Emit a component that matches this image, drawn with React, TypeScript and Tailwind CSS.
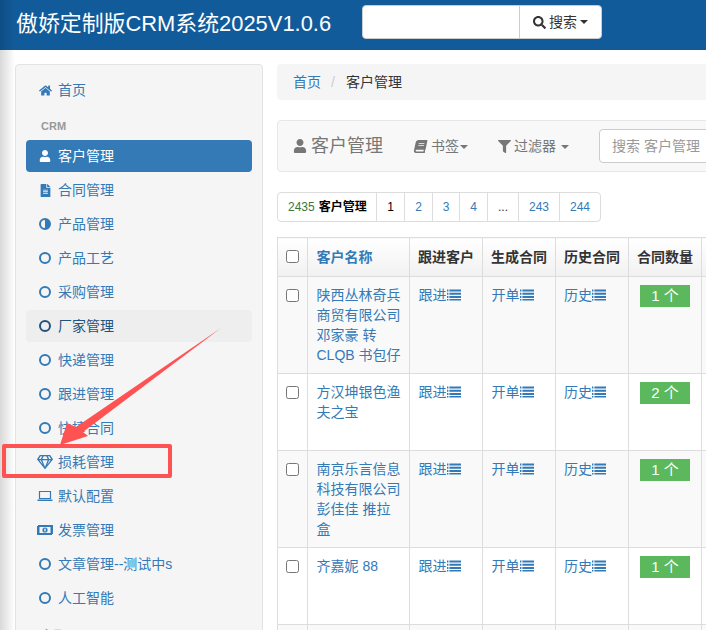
import React from "react";
import { FaHome, FaUser, FaFileAlt, FaRegGem, FaBook, FaFilter, FaSearch } from "react-icons/fa";

const Ring = () => (
  <svg width="14" height="14" viewBox="0 0 14 14" className="shrink-0">
    <circle cx="7" cy="7" r="5" fill="none" stroke="currentColor" strokeWidth="2" />
  </svg>
);
const Half = () => (
  <svg width="14" height="14" viewBox="0 0 14 14" className="shrink-0">
    <circle cx="7" cy="7" r="5" fill="none" stroke="currentColor" strokeWidth="2" />
    <path d="M7 2a5 5 0 0 1 0 10z" fill="currentColor" />
  </svg>
);
const Laptop = () => (
  <svg width="16" height="14" viewBox="0 0 16 14" className="shrink-0">
    <path d="M2.5 2.5h11v7h-11z" fill="none" stroke="currentColor" strokeWidth="1.2" />
    <path d="M0.5 10.5h15v1.5h-15z" fill="currentColor" />
  </svg>
);
const Money = () => (
  <svg width="16" height="14" viewBox="0 0 16 14" className="shrink-0">
    <path fillRule="evenodd" d="M0 2h16v10H0zM2.5 4v6h11V4z" fill="currentColor" />
    <circle cx="8" cy="7" r="2.6" fill="currentColor" />
    <rect x="7.3" y="5.6" width="1.4" height="2.8" fill="#f5f5f5" />
    <rect x="0" y="2" width="1" height="1" fill="#f5f5f5" />
    <rect x="15" y="11" width="1" height="1" fill="#f5f5f5" />
  </svg>
);
const ListIcon = () => (
  <svg width="14" height="14" viewBox="0 0 14 14" className="inline-block align-[-2px]">
    <path
      d="M0 1.5h1.4v2H0zM2.4 1.5H14v2H2.4zM0 4.7h1.4v2H0zM2.4 4.7H14v2H2.4zM0 7.9h1.4v2H0zM2.4 7.9H14v2H2.4zM0 11h1.4v1.6H0zM2.4 11H14v1.6H2.4z"
      fill="currentColor"
    />
  </svg>
);
const Caret = () => (
  <span className="inline-block w-0 h-0 align-middle border-x-[4px] border-x-transparent border-t-[4px] border-t-current" />
);

type Item = { label: string; icon: React.ReactNode; active?: boolean; hover?: boolean };

const items: Item[] = [
  { label: "客户管理", icon: <FaUser size={12} />, active: true },
  { label: "合同管理", icon: <FaFileAlt size={13} /> },
  { label: "产品管理", icon: <Half /> },
  { label: "产品工艺", icon: <Ring /> },
  { label: "采购管理", icon: <Ring /> },
  { label: "厂家管理", icon: <Ring />, hover: true },
  { label: "快递管理", icon: <Ring /> },
  { label: "跟进管理", icon: <Ring /> },
  { label: "快捷合同", icon: <Ring /> },
  { label: "损耗管理", icon: <FaRegGem size={16} /> },
  { label: "默认配置", icon: <Laptop /> },
  { label: "发票管理", icon: <Money /> },
  { label: "文章管理--测试中s", icon: <Ring /> },
  { label: "人工智能", icon: <Ring /> },
];

const NavRow = ({ item }: { item: Item }) => (
  <a
    className={
      "flex items-center h-8 rounded pl-[6px] " +
      (item.active
        ? "bg-[#337ab7] text-white"
        : item.hover
          ? "bg-[#eeeeee] text-[#23527c]"
          : "text-[#337ab7]")
    }
  >
    <span className="w-[26px] flex justify-center shrink-0">{item.icon}</span>
    <span>{item.label}</span>
  </a>
);

const rows = [
  { name: "陕西丛林奇兵商贸有限公司 邓家豪 转 CLQB 书包仔", n: 1, cls: "bg-[#f9f9f9]" },
  { name: "方汉坤银色渔夫之宝", n: 2, cls: "bg-white" },
  { name: "南京乐言信息科技有限公司 彭佳佳 推拉盒", n: 1, cls: "bg-[#f9f9f9]" },
  { name: "齐嘉妮 88", n: 1, cls: "bg-white" },
];

const td = "border border-[#dddddd] py-2 pr-2 pl-[8.5px] align-top";
const th = "border border-[#dddddd] py-2 pr-2 pl-[8.5px] align-middle text-left font-bold text-[#333333] bg-gradient-to-b from-white to-[#f1f1f1]";

const pages = [
  { p: "1", w: "w-[28px] text-black" },
  { p: "2", w: "w-[28px] text-[#337ab7]" },
  { p: "3", w: "w-[27px] text-[#337ab7]" },
  { p: "4", w: "w-[28px] text-[#337ab7]" },
  { p: "...", w: "w-[31px] text-[#333333]" },
  { p: "243", w: "w-[41px] text-[#337ab7]" },
  { p: "244", w: "flex-1 text-[#337ab7]" },
];

export default function App() {
  return (
    <div
      className="relative w-[706px] h-[630px] overflow-hidden bg-white text-[14px] leading-5 text-[#333333]"
      style={{ fontFamily: '"Liberation Sans", "Noto Sans CJK SC", sans-serif' }}
    >
      <header className="h-[50px] bg-[#125b9b] flex items-center pl-4">
        <h1 className="text-[21.9px] text-white font-normal whitespace-nowrap w-[346px] shrink-0 pb-[3px]">
          傲娇定制版CRM系统2025V1.0.6
        </h1>
        <div className="flex h-[34px] w-[240px] -mt-[6px] rounded bg-white border border-[#cccccc]">
          <div className="w-[157px] border-r border-[#cccccc]" />
          <div className="flex-1 flex items-center justify-center gap-[3px] text-[#333333]">
            <FaSearch size={13} />
            <span>搜索</span>
            <Caret />
          </div>
        </div>
      </header>

      <div className="flex items-start pl-[15px] pt-[14px] gap-[14px]">
        <aside className="w-[248px] h-[620px] shrink-0 bg-[#f5f5f5] border border-[#e3e3e3] rounded px-[10px] pt-[9px]">
          <NavRow item={{ label: "首页", icon: <FaHome size={13} /> }} />
          <div className="h-[18px] mt-[11px] mb-[5px] pl-[15px] text-[11px] font-bold text-[#999999] leading-[18px]">CRM</div>
          <div className="flex flex-col gap-[2px]">
            {items.map((it) => (
              <NavRow key={it.label} item={it} />
            ))}
          </div>
          <div className="mt-[11px] pl-[15px] text-[11px] font-bold text-[#999999]">产品</div>
        </aside>

        <main className="flex-1 min-w-0">
          <nav className="h-9 w-[600px] bg-[#f5f5f5] rounded flex items-center pl-[16px] whitespace-nowrap">
            <a className="text-[#337ab7]">首页</a>
            <span className="text-[#cccccc] px-[10px]">/</span>
            <span className="text-[#333333] pl-[1px]">客户管理</span>
          </nav>

          <div className="mt-5 h-[52px] w-[600px] bg-[#f8f8f8] border border-[#e7e7e7] rounded flex items-center whitespace-nowrap text-[#777777]">
            <span className="ml-[15px] flex items-center gap-[4px] w-[120px] shrink-0 text-[18px]">
              <FaUser size={14} className="shrink-0" />
              <span>客户管理</span>
            </span>
            <span className="flex items-center gap-[4px] w-[85px] shrink-0 pl-[1px]">
              <FaBook size={13} className="-skew-x-12" />
              <span>书签</span>
              <span className="-ml-[3px]"><Caret /></span>
            </span>
            <span className="flex items-center gap-[3px] w-[101px] shrink-0">
              <FaFilter size={13} />
              <span>过滤器</span>
              <span className="ml-[2px]"><Caret /></span>
            </span>
            <div className="h-[34px] w-[200px] shrink-0 bg-white border border-[#cccccc] rounded flex items-center pl-3 text-[#999999]">
              搜索 客户管理
            </div>
          </div>

          <div className="mt-5 h-[30px] w-[324px] flex border border-[#dddddd] rounded text-[12px] bg-white whitespace-nowrap">
            <div className="w-[99px] shrink-0 flex items-center pl-[10px] border-r border-[#dddddd]">
              <span className="text-[#3c763d]">2435</span>
              <b className="ml-[4px] text-black">客户管理</b>
            </div>
            {pages.map((x, i) => (
              <div
                key={x.p}
                className={
                  "flex items-center justify-center shrink-0 " +
                  (i < pages.length - 1 ? "border-r border-[#dddddd] " : "") +
                  x.w
                }
              >
                {x.p}
              </div>
            ))}
          </div>

          <table className="mt-[15px] table-fixed border-collapse w-[530px]">
            <colgroup>
              <col className="w-[30px]" />
              <col className="w-[102px]" />
              <col className="w-[73px]" />
              <col className="w-[73px]" />
              <col className="w-[73px]" />
              <col className="w-[73px]" />
              <col className="w-[106px]" />
            </colgroup>
            <thead>
              <tr className="h-[39px]">
                <th className={th + " !pl-2"}>
                  <input type="checkbox" className="block w-[13px] h-[13px] -mt-[1px]" />
                </th>
                <th className={th + " !text-[#337ab7]"}>客户名称</th>
                <th className={th + " !pl-2 whitespace-nowrap"}>跟进客户</th>
                <th className={th + " !pl-2 whitespace-nowrap"}>生成合同</th>
                <th className={th + " !pl-2 whitespace-nowrap"}>历史合同</th>
                <th className={th + " !pl-2 whitespace-nowrap"}>合同数量</th>
                <th className={th} />
              </tr>
            </thead>
            <tbody>
              {rows.map((r) => (
                <tr key={r.name} className={r.cls + " h-[77px]"}>
                  <td className={td + " !pl-2"}>
                    <input type="checkbox" className="block mt-[4px] w-[13px] h-[13px]" />
                  </td>
                  <td className={td + " text-[#337ab7]"}>{r.name}</td>
                  <td className={td + " text-[#337ab7] whitespace-nowrap"}>跟进<ListIcon /></td>
                  <td className={td + " text-[#337ab7] whitespace-nowrap"}>开单<ListIcon /></td>
                  <td className={td + " !pl-2 text-[#337ab7] whitespace-nowrap"}>历史<ListIcon /></td>
                  <td className="border border-[#dddddd] py-2 align-top">
                    <div className="mx-auto w-[50px] h-[22px] bg-[#5cb85c] text-white text-center leading-[22px] text-[15px]">
                      {r.n} 个
                    </div>
                  </td>
                  <td className={td} />
                </tr>
              ))}
              <tr className="h-[77px] bg-[#f9f9f9]">
                <td className={td} />
                <td className={td} />
                <td className={td} />
                <td className={td} />
                <td className={td} />
                <td className={td} />
                <td className={td} />
              </tr>
            </tbody>
          </table>
        </main>
      </div>

      {/* page edge shadow */}
      <div className="absolute left-0 top-0 bottom-0 w-[15px] bg-gradient-to-r from-[#00000026] to-transparent pointer-events-none" />

      {/* annotation */}
      <div className="absolute left-[2px] top-[444px] w-[170px] h-[34px] border-[4px] border-[#ff5353] rounded-[2px] pointer-events-none" />
      <svg width="706" height="630" className="absolute left-0 top-0 pointer-events-none">
        <polygon points="221,328 83,432 88,436 60,445 67,423 76,427" fill="#ff5353" />
      </svg>
    </div>
  );
}
